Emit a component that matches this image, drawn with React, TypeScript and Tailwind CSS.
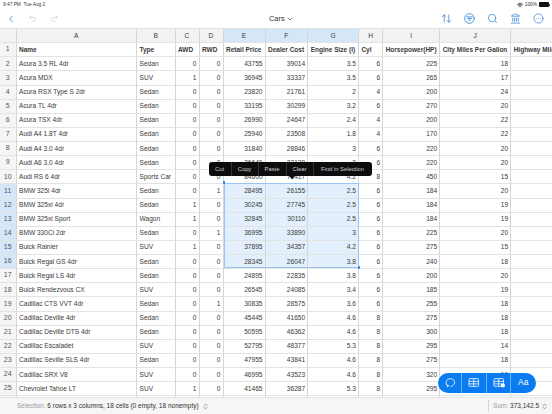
import { ArrowUpDown, ChevronDown, ChevronLeft, ChevronsUpDown, CircleEllipsis, Landmark, Redo2, Search, Undo2, Wifi } from "lucide-react";

const headers = ["A", "B", "C", "D", "E", "F", "G", "H", "I", "J", ""];

const rows = [
  ["Name", "Type", "AWD", "RWD", "Retail Price", "Dealer Cost", "Engine Size (l)", "Cyl", "Horsepower(HP)", "City Miles Per Gallon", "Highway Miles Per Gallon"],
  ["Acura 3.5 RL 4dr", "Sedan", "0", "0", "43755", "39014", "3.5", "6", "225", "18", ""],
  ["Acura MDX", "SUV", "1", "0", "36945", "33337", "3.5", "6", "265", "17", ""],
  ["Acura RSX Type S 2dr", "Sedan", "0", "0", "23820", "21761", "2", "4", "200", "24", ""],
  ["Acura TL 4dr", "Sedan", "0", "0", "33195", "30299", "3.2", "6", "270", "20", ""],
  ["Acura TSX 4dr", "Sedan", "0", "0", "26990", "24647", "2.4", "4", "200", "22", ""],
  ["Audi A4 1.8T 4dr", "Sedan", "0", "0", "25940", "23508", "1.8", "4", "170", "22", ""],
  ["Audi A4 3.0 4dr", "Sedan", "0", "0", "31840", "28846", "3", "6", "220", "20", ""],
  ["Audi A6 3.0 4dr", "Sedan", "0", "0", "36640", "33129", "3", "6", "220", "20", ""],
  ["Audi RS 6 4dr", "Sports Car", "0", "0", "84600", "76417", "4.2", "8", "450", "15", ""],
  ["BMW 325i 4dr", "Sedan", "0", "1", "28495", "26155", "2.5", "6", "184", "20", ""],
  ["BMW 325xi 4dr", "Sedan", "1", "0", "30245", "27745", "2.5", "6", "184", "19", ""],
  ["BMW 325xi Sport", "Wagon", "1", "0", "32845", "30110", "2.5", "6", "184", "19", ""],
  ["BMW 330Ci 2dr", "Sedan", "0", "1", "36995", "33890", "3", "6", "225", "20", ""],
  ["Buick Rainier", "SUV", "1", "0", "37895", "34357", "4.2", "6", "275", "15", ""],
  ["Buick Regal GS 4dr", "Sedan", "0", "0", "28345", "26047", "3.8", "6", "240", "18", ""],
  ["Buick Regal LS 4dr", "Sedan", "0", "0", "24895", "22835", "3.8", "6", "200", "20", ""],
  ["Buick Rendezvous CX", "SUV", "0", "0", "26545", "24085", "3.4", "6", "185", "19", ""],
  ["Cadillac CTS VVT 4dr", "Sedan", "0", "1", "30835", "28575", "3.6", "6", "255", "18", ""],
  ["Cadillac Deville 4dr", "Sedan", "0", "0", "45445", "41650", "4.6", "8", "275", "18", ""],
  ["Cadillac Deville DTS 4dr", "Sedan", "0", "0", "50595", "46362", "4.6", "8", "300", "18", ""],
  ["Cadillac Escaladet", "SUV", "0", "0", "52795", "48377", "5.3", "8", "295", "14", ""],
  ["Cadillac Seville SLS 4dr", "Sedan", "0", "0", "47955", "43841", "4.6", "8", "275", "18", ""],
  ["Cadillac SRX V8", "SUV", "0", "0", "46995", "43523", "4.6", "8", "320", "16", ""],
  ["Chevrolet Tahoe LT", "SUV", "1", "0", "41465", "36287", "5.3", "8", "295", "14", ""],
  ["", "", "", "", "", "", "", "", "", "", ""],
];

const rowGrid = "grid h-[14.125px] grid-cols-[16.5px_120.5px_38.5px_24px_24px_42px_42.7px_50.7px_24.3px_57px_71px_60px]";
const cellBase = "flex items-center overflow-hidden whitespace-nowrap border-r border-b border-r-[#d6d6d6] border-b-[#e3e3e3]";

function HeaderRow() {
  return (
    <div className={rowGrid + " h-[13.5px]"}>
      <div className={cellBase + " bg-[#f2f2f2]"} />
      {headers.map((h, i) => (
        <div key={i} className={cellBase + " justify-center " + (i >= 4 && i <= 6 ? "bg-[#d6e6f9]" : "bg-[#f2f2f2]")}>
          {h}
        </div>
      ))}
    </div>
  );
}

function DataRow({ cells, num }: { cells: string[]; num: number }) {
  const rowSelected = num >= 11 && num <= 16;
  return (
    <div className={rowGrid}>
      <div className={cellBase + " justify-center text-[7px] text-[#555] " + (rowSelected ? "bg-[#d6e6f9]" : "bg-[#f5f5f5]")}>{cells[0] ? num : ""}</div>
      {cells.map((c, i) => {
        const isText = i < 2 || num === 1;
        const selected = rowSelected && i >= 4 && i <= 6;
        return (
          <div
            key={i}
            className={
              cellBase +
              (num === 1 ? " text-[6.5px] font-bold px-[2.5px] justify-start" : isText ? " px-[2.5px] justify-start" : " pr-[2px] justify-end") +
              (selected ? " bg-[#e3effc]" : " bg-white")
            }
          >
            {c}
          </div>
        );
      })}
    </div>
  );
}

function Battery() {
  return (
    <div className="flex items-center">
      <div className="h-[5.5px] w-[10px] rounded-[1px] bg-[#111]" />
      <div className="ml-[0.5px] h-[2px] w-[1px] bg-[#555]" />
    </div>
  );
}

function FilterCircle() {
  return (
    <svg width="11" height="11" viewBox="0 0 24 24" fill="none" stroke="#2a82dc" strokeWidth="1.8" strokeLinecap="round">
      <circle cx="12" cy="12" r="10.5" />
      <path d="M6 8.5h12M8 12h8M10 15.5h4" />
    </svg>
  );
}

function LassoIcon() {
  return (
    <svg width="11" height="11" viewBox="0 0 24 24" fill="none" stroke="white" strokeWidth="1.8" strokeLinecap="round">
      <path d="M15 20.5a9.5 8.5 0 1 0-8-2.5" />
      <path d="M6 17l2 5 2-3.5" />
    </svg>
  );
}

function SheetIcon({ dot }: { dot?: boolean }) {
  return (
    <svg width="12" height="11" viewBox="0 0 26 24" fill="none" stroke="white" strokeWidth="1.7">
      <rect x="2" y="3.5" width="21" height="17" rx="2" />
      <path d="M2 9.5h21M2 15h21M12.5 3.5v17" />
      {dot ? <circle cx="21.5" cy="18.5" r="4.5" fill="white" stroke="none" /> : null}
    </svg>
  );
}

const menuItems = [
  { label: "Cut", width: "w-[23px]" },
  { label: "Copy", width: "w-[27px]" },
  { label: "Paste", width: "w-[28px]" },
  { label: "Clear", width: "w-[27px]" },
  { label: "Find in Selection", width: "w-[58px]" },
];

export default function App() {
  return (
    <div className="relative flex h-[414px] w-[552px] flex-col overflow-hidden bg-white font-['Liberation_Sans',sans-serif] text-[6.6px] text-[#3a3a3a]">
      <div className="flex h-[9px] items-center justify-between pl-[3px] pr-[2px] text-[4.8px] text-[#333]">
        <span>9:47 PM&nbsp;&nbsp;Tue Aug 2</span>
        <div className="flex items-center gap-[1.5px]">
          <Wifi size={6} strokeWidth={3} color="#222" />
          <span>100%</span>
          <Battery />
        </div>
      </div>

      <div className="relative flex h-[19px] items-center justify-between pl-[5px] pr-[8.5px]">
        <div className="flex items-center">
          <ChevronLeft size={12} color="#2a82dc" strokeWidth={1.6} />
          <Undo2 size={9} color="#c4c4c4" strokeWidth={1.5} className="ml-[10.5px]" />
          <Redo2 size={9} color="#c4c4c4" strokeWidth={1.5} className="ml-[13px]" />
        </div>
        <div className="absolute left-[269px] top-0 flex h-full items-center gap-[1px] text-[7.4px] font-medium text-[#333]">
          Cars
          <ChevronDown size={8} strokeWidth={2} color="#333" />
        </div>
        <div className="flex items-center gap-[12px]">
          <ArrowUpDown size={11} color="#2a82dc" strokeWidth={1.6} />
          <FilterCircle />
          <Search size={11} color="#2a82dc" strokeWidth={1.6} />
          <Landmark size={11} color="#2a82dc" strokeWidth={1.6} />
          <CircleEllipsis size={11} color="#2a82dc" strokeWidth={1.5} />
        </div>
      </div>

      <div className="flex-1 overflow-hidden border-t border-t-[#e0e0e0]">
        <HeaderRow />
        {rows.map((r, i) => (
          <DataRow key={i} cells={r} num={i + 1} />
        ))}
      </div>

      <div className="flex h-[17px] items-center justify-between border-t border-t-[#e4e4e4] bg-[#f6f6f6] pl-[17px] pr-[4px] text-[6.5px]">
        <div className="flex items-center gap-[3px] text-[#333]">
          <span>
            <span className="text-[#9a9a9a]">Selection: </span>
            6 rows x 3 columns, 18 cells (0 empty, 18 nonempty)
          </span>
          <ChevronsUpDown size={7} color="#555" />
        </div>
        <div className="flex h-[12px] items-center gap-[2px] border-l border-l-[#d4d4d4] pl-[4px] text-[#333]">
          <span>
            <span className="text-[#9a9a9a]">Sum: </span>
            373,142.5
          </span>
          <ChevronsUpDown size={7} color="#555" />
        </div>
      </div>

      {/* selection box */}
      <div className="pointer-events-none absolute left-[224px] top-[182.5px] h-[85px] w-[135px] border border-[#9cc4f0]" />
      <div className="absolute left-[222.8px] top-[181.3px] h-[2.5px] w-[2.5px] rounded-full bg-[#1c7ee6]" />
      <div className="absolute left-[357.8px] top-[266.3px] h-[2.5px] w-[2.5px] rounded-full bg-[#1c7ee6]" />

      {/* edit menu */}
      <div className="absolute left-[208.5px] top-[162.3px] flex h-[14px] w-[163px] items-center rounded-[3px] bg-[#0d0d0f] text-[5.8px] text-[#cfcfcf]">
        {menuItems.map((m, i) => (
          <div key={m.label} className={"flex h-full items-center justify-center whitespace-nowrap " + m.width + (i < menuItems.length - 1 ? " border-r border-r-[#333]" : "")}>
            {m.label}
          </div>
        ))}
      </div>
      <div className="absolute left-[288.5px] top-[176px] h-0 w-0 border-x-[3px] border-t-[3.5px] border-x-transparent border-t-[#0d0d0f]" />

      {/* floating tools */}
      <div className="absolute left-[437.5px] top-[372.7px] flex h-[20px] w-[98px] items-center rounded-full bg-[#0b7bf0] text-white">
        <div className="flex h-full w-[24.5px] items-center justify-center border-r border-r-[#6fb1f6]">
          <LassoIcon />
        </div>
        <div className="flex h-full w-[25px] items-center justify-center border-r border-r-[#6fb1f6]">
          <SheetIcon />
        </div>
        <div className="flex h-full w-[24px] items-center justify-center border-r border-r-[#6fb1f6]">
          <SheetIcon dot />
        </div>
        <div className="flex h-full flex-1 items-center justify-center text-[8.5px]">Aa</div>
      </div>
    </div>
  );
}
